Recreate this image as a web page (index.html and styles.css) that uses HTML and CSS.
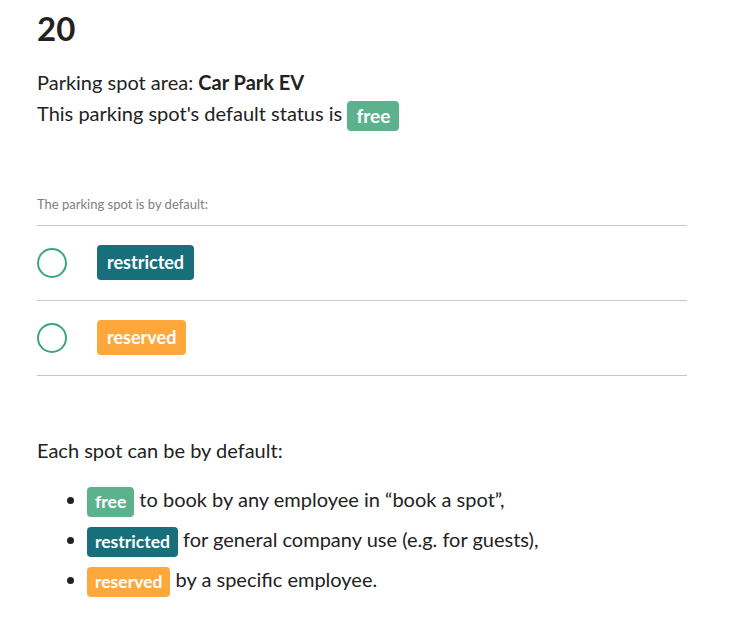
FILE: index.html
```html
<!DOCTYPE html>
<html lang="en">
<head>
    <meta charset="UTF-8">
    <meta name="viewport" content="width=device-width, initial-scale=1.0">
    <title>Parking spot 20</title>
    <link rel="stylesheet" href="styles.css">
</head>
<body>

<div class="spot">
    <h1>20</h1>
    <p class="info">Parking spot area: <b>Car Park EV</b></p>
    <p class="info">This parking spot's default status is <span class="badge mid free">free</span></p>

    <!-- Default status choice -->
    <div class="choice">
        <p class="choice-label">The parking spot is by default:</p>
        <label class="choice-row">
            <span class="radio"></span>
            <span class="badge big restricted">restricted</span>
        </label>
        <label class="choice-row">
            <span class="radio"></span>
            <span class="badge big reserved">reserved</span>
        </label>
    </div>

    <!-- Legend -->
    <div class="legend">
        <p class="info">Each spot can be by default:</p>
        <ul>
            <li><span class="badge free">free</span> to book by any employee in “book a spot”,</li>
            <li><span class="badge restricted">restricted</span> for general company use (e.g. for guests),</li>
            <li><span class="badge reserved">reserved</span> by a specific employee.</li>
        </ul>
    </div>
</div>

</body>
</html>
```

FILE: styles.css
```css
body {
    font-family: Lato, "Open Sans", sans-serif;
    margin: 0;
    padding: 0;
    color: #222;
    background: #fff;
}

.spot {
    width: 650px;
    padding: 8px 0 0 37px;
}

h1 {
    font-size: 33px;
    font-weight: 700;
    margin: 0 0 19px;
    line-height: 40px;
}

.info {
    font-size: 20px;
    line-height: 31px;
    margin: 0;
}

.info b {
    font-weight: 700;
}

.badge {
    display: inline-block;
    color: #fff;
    font-weight: 700;
    font-size: 17.5px;
    line-height: 24px;
    padding: 3px 8px;
    border-radius: 4px;
    vertical-align: middle;
}

.badge.mid {
    font-size: 19px;
    padding: 3px 9px;
}

.badge.big {
    font-size: 18px;
    line-height: 25px;
    padding: 5px 10px;
}

.badge.free {
    background-color: #5db28e;
}

.badge.restricted {
    background-color: #176f7c;
}

.badge.reserved {
    background-color: #fea83b;
}

.choice {
    margin-top: 65px;
}

.choice-label {
    font-size: 13px;
    color: #808080;
    margin: 0 0 13px;
}

.choice-row {
    display: flex;
    align-items: center;
    gap: 30px;
    height: 74px;
    border-top: 1px solid #c6c6c6;
}

.choice-row:last-child {
    border-bottom: 1px solid #c6c6c6;
}

.radio {
    width: 26px;
    height: 26px;
    border: 2px solid #3aa57d;
    border-radius: 50%;
}

.legend {
    margin-top: 59px;
}

.legend ul {
    margin: 18px 0 0;
    padding-left: 50px;
}

.legend li {
    font-size: 20px;
    line-height: 30px;
    margin-bottom: 7px;
}

.legend li::marker {
    font-size: 20px;
}
```
